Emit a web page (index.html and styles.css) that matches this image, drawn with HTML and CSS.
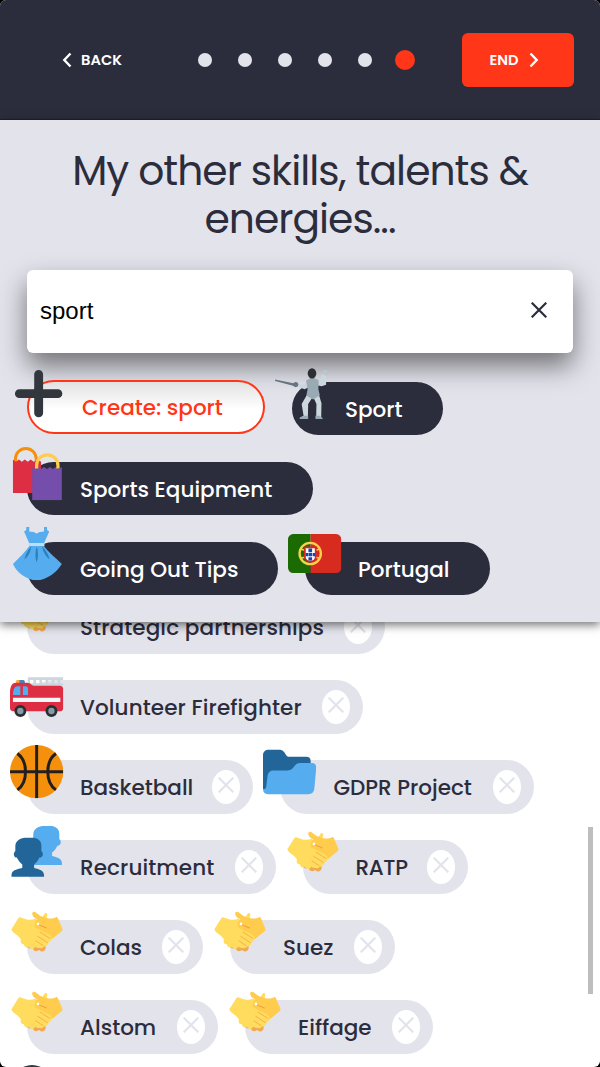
FILE: index.html
```
<!DOCTYPE html>
<html lang="en">
<head>
<meta charset="utf-8">
<title>My other skills</title>
<link rel="stylesheet" href="styles.css">
</head>
<body>
<svg class="defs" aria-hidden="true">
  <defs>
    <symbol id="plus" viewBox="0 0 36 36"><path fill="#31373d" d="M31 15H21V5a3 3 0 0 0-6 0v10H5a3 3 0 0 0 0 6h10v10a3 3 0 0 0 6 0V21h10a3 3 0 0 0 0-6z"/></symbol>
    <symbol id="fencer" viewBox="0 0 36 36">
      <path d="M0 8.500l.1.900L12.800 12.800l.5-1.600z" fill="#66757f"/>
      <path d="M22 9.800l-3 2.200-4-1-.5 2 5.500 2 4-2zM27 8.500l3.600 1 1.500-5h2.500L34.500 12l-3 1-4.500-1z" fill="#ccd6dd"/>
      <circle cx="34" cy="3.900" r="1.800" fill="#b8c6d0"/><circle cx="14" cy="11.900" r="1.700" fill="#66757f"/>
      <path d="M22 18l-4 7 1.300 8-2.800 1.500h5.700l.2-9.500 3.300-5L28 25l-.2 9h3.400l.2-9.500L29.300 17.500z" fill="#ccd6dd"/>
      <path d="M21 9.200l3-1.700h2.600l2.900 1.500-.2 6 1 4-4.500 3-4.600-2.800.8-4.200z" fill="#99aab5"/>
      <path d="M16.600 35.200c0-1.700 2.500-1.500 3.500-2.200h2.300v2.200zM27.300 35.200V33H30c.5.700 2.200.8 2.200 2.200z" fill="#99aab5"/>
      <ellipse cx="25" cy="4.300" rx="2.900" ry="3.500" fill="#292f33"/>
    </symbol>
    <symbol id="bags" viewBox="0 0 36 36">
      <path d="M3.700 10V8a7 7 0 0 1 14 0v2" fill="none" stroke="#f4900c" stroke-width="2"/>
      <path fill="#dd2e44" d="M2 8.500l2 1.500 2-1.500L8 10l2-1.500 2 1.500 2-1.500 2 1.500 3-1.500 2 1.500v21H2z"/>
      <path fill="#744eaa" d="M15 13.500l2 1.400 2-1.400 2 1.400 2-1.400 2 1.400 2-1.400 2 1.400 2-1.400 2 1.400 2-1.400V36H15z"/>
      <path d="M18 14.500V12.500a7.200 7.200 0 0 1 14.400 0v2" fill="none" stroke="#ffcc4d" stroke-width="2.200"/>
    </symbol>
    <symbol id="dress" viewBox="0 0 36 36">
      <path fill="#55acee" d="M11 0v2l-1.500 1L13 11v2C10 17 6 21 2 25c2 5 9 11 16 11s14-6 17-11c-4-4-9-8-12-12v-2l3.500-8L25 2V0h-2v3c-2 0-4 .5-5 1.500C17 3.500 15 3 13 3V0z"/>
      <path fill="#bbddf5" d="M12.500 10.800h10.800v2H12.500z"/>
      <path fill="#2a81bd" d="M14.400 13c-.6 4-2 7-4.700 9 .6-3 2-6 4.700-9zM17.700 14h.7c.8 4 .7 7-.4 10-1-3-1-6-.3-10zM21.600 13c3 3 4.600 6 5.200 9-2.700-2-4.400-5-5.200-9z"/>
    </symbol>
    <symbol id="portugal" viewBox="0 0 36 36">
      <path fill="#1b6b02" d="M15.300 4.800v26.300H3.500A3.500 3.500 0 0 1 0 27.500v-19a3.500 3.500 0 0 1 3.500-3.700z"/><path fill="#d82b20" d="M15.300 4.800h17.200a3.500 3.500 0 0 1 3.500 3.700v19a3.500 3.500 0 0 1-3.500 3.600H15.300z"/>
      <circle cx="15" cy="17.900" r="7.200" fill="none" stroke="#f9d14a" stroke-width="1.600"/>
      <path d="M8.500 15c4 1 9 1 13 0M8.500 21c4-1 9-1 13 0" fill="none" stroke="#f9d14a"/>
      <path d="M11.400 13.700h7.300v6.600c0 4.200-7.300 4.200-7.300 0z" fill="#fff" stroke="#da291c" stroke-width="1.200"/>
      <path fill="#1546b0" d="M13.800 14.600h2.500V17h-2.500zM13.800 17.500h2.500v2.300h-2.500zM13.800 20.400h2.500v2.200h-2.500zM11.900 17.500h1.600v2.300h-1.600zM16.700 17.500h1.600v2.300h-1.600z"/>
    </symbol>
    <symbol id="fire" viewBox="0 0 36 36">
      <path fill="#ccd6dd" fill-rule="evenodd" d="M12 8.300h24v6H15l-3-3zM13.500 10.200v2.100h2.300v-2.100zM17.600 10.200v2.100h2.300v-2.100zM21.700 10.200v2.100H24v-2.100zM25.800 10.200v2.100h2.300v-2.100zM29.900 10.200v2.100h2.300v-2.100zM34 10.200v2.100h2v-2.100z"/>
      <path fill="#ffac33" d="M4 12.500v-1.400c0-.6.500-1 1-1h1.500v2.400z"/><path fill="#3b88c3" d="M6.300 10.100H9c.6 0 1 .5 1 1v1.400H6.300z"/>
      <path fill="#dd2e44" d="M4 12h8c2 0 2.500 2 4 2h17.500c1.500 0 2.500 1 2.500 2.500V29c0 1.500-1 2.300-2.500 2.300H2.500C1 31.300 0 30.500 0 29V19c0-4 1-7 4-7z"/>
      <path fill="#55acee" d="M5 14.300h2v6H2c0-2.500.7-6 3-6zM8.700 14.300h2c1 0 1.500.7 1.500 1.700v4.300H8.700z"/>
      <path fill="#f5f8fa" d="M2 22.200h32V25H2z"/>
      <g fill="#8899a6" stroke="#292f33" stroke-width="1.900"><circle cx="7" cy="31.100" r="3.100"/><circle cx="28" cy="31.100" r="3.100"/></g>
    </symbol>
    <symbol id="ball" viewBox="0 0 36 36">
      <circle cx="18" cy="18" r="18" fill="#f4900c"/>
      <path d="M18 0v36M0 18h36M5 5.700C12.300 11 12.300 25 5 30.300M31 5.700C23.700 11 23.700 25 31 30.300" fill="none" stroke="#231f20" stroke-width="2"/>
    </symbol>
    <symbol id="folder" viewBox="0 0 36 36">
      <path fill="#226699" d="M0 30V7c0-2.500 1.500-3.800 4-3.800h7c2.500 0 3.300 1.500 4.200 3 .6 1.100 1.300 1.800 3 1.800h11c2 0 3 1 3 3v19z"/>
      <path fill="#55acee" d="M3 21.500c.2-3 1.800-4.300 4.500-4.300h9c2.500 0 3.500-1.200 4.500-2.600 1-1.300 2-2.400 4-2.400h8c2 0 3 1.300 3 3l-1.300 14c-.3 2.600-1.500 4-4.200 4H3.500C1 33.200.200 31.500 0 30c1.500 0 2-.8 2.200-2z"/>
    </symbol>
    <symbol id="people" viewBox="0 0 36 36">
      <path transform="translate(12.100 -8)" fill="#55acee" d="M16.300 29v-2.400c1.500-1 2.700-2.600 3.600-4.600 1.300 0 2.300-1 2.300-2.300 0-.9-.3-1.700-1-2.200v-3.600c0-3.600-3-5.300-6-5.300h-5c-3.600.4-6.600 2-6.600 6v2.900c-.6.500-1 1.300-1 2.200 0 1.300.8 2.300 2 2.300 1 2 2.200 3.600 3.700 4.600V29C4 30 1 30.600 1 34v1h22v-1c0-3.400-3-4-6.700-5z"/>
      <path fill="#226699" d="M16.300 29v-2.400c1.500-1 2.700-2.600 3.600-4.600 1.300 0 2.300-1 2.300-2.300 0-.9-.3-1.700-1-2.200v-3.600c0-3.600-3-5.300-6-5.300h-5c-3.600.4-6.600 2-6.600 6v2.900c-.6.500-1 1.300-1 2.200 0 1.300.8 2.300 2 2.300 1 2 2.200 3.600 3.700 4.600V29C4 30 1 30.600 1 34v1h22v-1c0-3.400-3-4-6.700-5z"/>
    </symbol>
    <symbol id="hands" viewBox="0 0 36 36">
      <path fill="#f0a950" d="M8.500 22c-1.500 2.500.3 5 2.500 4.200.3 3 2.400 3.900 4 2.500.8 2.700 3.200 3.200 4.600 1.500 1.700 2.200 4.200 1.200 4.600-1.500L22 22z"/>
      <path fill="#ffdc5d" d="M21.500 9.200l1.700-3.100c.7-1.200 2.300-.5 2 .9l-.8 3zM.9 16.300L5.600 9c.4-.7 1-.8 1.700-.6 2.700.9 5.700 2.600 10 .9l10.500 8-3.600 9.500c-.5 2-2.300 1.800-3.200.4-.2 2-2.500 2.400-3.900.8-.8 2.300-3.200 2-4.300.2-1.500 1.200-3 .2-3.400-1.700-1.700.2-2.700-1.400-2-3.200l-1-1.300C5 19.500 2 19.500.9 16.300z"/>
      <path fill="#ffcc4d" d="M15 6.300c-.4-1.500 1.200-2.200 2.300-1.400l3.300 2.500c4.600 1.300 6.700 2.800 10.500.8.500-.2.900 0 1.200.5L35.400 16c.2.600 0 1.200-.5 1.700L28 23.300l-5.200-4-6-4.100c-.7-1 0-2.100.3-3.400.2-.9.800-1.600 1.400-2.200-1.900-.3-3-1.600-3.500-3.300z"/>
      <path fill="#ffdc5d" d="M16 14.500l10.500 5.500c2.500 1.500 1.500 5-.5 5.300-.2 1.800-1.500 3-3.200 2.200-.3 1.900-2 2.200-3.600 1.200L12 22z"/>
      <path d="M19.500 13.300c1.700 1.200 3.300 1.200 5 2.200" fill="none" stroke="#f0a040" stroke-width=".7" stroke-linecap="round"/>
      <circle cx="18.900" cy="12.800" r=".9" fill="#fff"/>
      <path d="M20.300 18.300l6.500 4.200M18.800 21.200l6.500 4.200M17.500 24.200l4.800 3.200" fill="none" stroke="#f2ad48" stroke-width=".6" stroke-linecap="round"/>
    </symbol>
    <symbol id="cross" viewBox="0 0 16 16"><path d="M.7.700l14.600 14.600M15.300.7L.7 15.300" fill="none" stroke="currentColor" stroke-width="2.200"/></symbol>
  </defs>
</svg>
<main class="screen">
  <header class="topbar">
    <button class="back"><svg class="chevron" viewBox="0 0 8 14"><path d="M7.500.5L1.300 7l6.200 6.500"/></svg><span>BACK</span></button>
    <div class="steps"><i></i><i></i><i></i><i></i><i></i><i class="current"></i></div>
    <button class="end"><span>END</span><svg class="chevron" viewBox="0 0 8 14"><path d="M.5.5L6.700 7 .5 13.500"/></svg></button>
  </header>
  <section class="panel">
    <h1>My other skills, talents &amp;<br>energies...</h1>
    <div class="search"><span>sport</span><svg><use href="#cross"/></svg></div>
    <div class="row first">
      <div class="chip create"><svg class="emoji"><use href="#plus"/></svg><span class="label">Create: sport</span></div>
      <div class="chip dark sport"><svg class="emoji"><use href="#fencer"/></svg><span class="label">Sport</span></div>
    </div>
    <div class="row"><div class="chip dark equipment"><svg class="emoji"><use href="#bags"/></svg><span class="label">Sports Equipment</span></div></div>
    <div class="row">
      <div class="chip dark going"><svg class="emoji"><use href="#dress"/></svg><span class="label">Going Out Tips</span></div>
      <div class="chip dark portugal"><svg class="emoji"><use href="#portugal"/></svg><span class="label">Portugal</span></div>
    </div>
  </section>
  <section class="list">
    <div class="row"><div class="chip strategic"><svg class="emoji"><use href="#hands"/></svg><span class="label">Strategic partnerships</span><button class="remove"><svg><use href="#cross"/></svg></button></div></div>
    <div class="row"><div class="chip volunteer"><svg class="emoji"><use href="#fire"/></svg><span class="label">Volunteer Firefighter</span><button class="remove"><svg><use href="#cross"/></svg></button></div></div>
    <div class="row">
      <div class="chip basketball"><svg class="emoji"><use href="#ball"/></svg><span class="label">Basketball</span><button class="remove"><svg><use href="#cross"/></svg></button></div>
      <div class="chip gdpr"><svg class="emoji"><use href="#folder"/></svg><span class="label">GDPR Project</span><button class="remove"><svg><use href="#cross"/></svg></button></div>
    </div>
    <div class="row">
      <div class="chip recruitment"><svg class="emoji"><use href="#people"/></svg><span class="label">Recruitment</span><button class="remove"><svg><use href="#cross"/></svg></button></div>
      <div class="chip ratp"><svg class="emoji"><use href="#hands"/></svg><span class="label">RATP</span><button class="remove"><svg><use href="#cross"/></svg></button></div>
    </div>
    <div class="row">
      <div class="chip colas"><svg class="emoji"><use href="#hands"/></svg><span class="label">Colas</span><button class="remove"><svg><use href="#cross"/></svg></button></div>
      <div class="chip suez"><svg class="emoji"><use href="#hands"/></svg><span class="label">Suez</span><button class="remove"><svg><use href="#cross"/></svg></button></div>
    </div>
    <div class="row">
      <div class="chip alstom"><svg class="emoji"><use href="#hands"/></svg><span class="label">Alstom</span><button class="remove"><svg><use href="#cross"/></svg></button></div>
      <div class="chip eiffage"><svg class="emoji"><use href="#hands"/></svg><span class="label">Eiffage</span><button class="remove"><svg><use href="#cross"/></svg></button></div>
    </div>
    <div class="next-emoji"></div>
    <div class="scrollbar"></div>
  </section>
</main>
</body>
</html>
```
FILE: styles.css
```
* { box-sizing: border-box; }
body { margin: 0; background: #000; font-family: Poppins, Inter, sans-serif; color: #2c2d3c; }
.defs { position: absolute; width: 0; height: 0; }
button { border: 0; padding: 0; background: none; font: inherit; color: inherit; }
.screen { width: 600px; height: 1067px; overflow: hidden; display: flex; flex-direction: column; border-radius: 6px; background: #fff; }
.topbar { height: 120px; flex: none; display: flex; align-items: center; background: #2c2d3c; color: #fff; font-size: 14.670px; font-weight: 600; border-bottom: 1px solid #1f202c; }
.topbar span { padding-top: 1px; }
.back { display: flex; align-items: center; gap: 10px; width: 135px; margin-left: 63px; white-space: nowrap; }
.chevron { width: 8px; height: 14px; fill: none; stroke: #fff; stroke-width: 2.400; overflow: visible; }
.steps { display: flex; align-items: center; gap: 26px; }
.steps i { width: 14px; height: 14px; border-radius: 50%; background: #e3e3ec; }
.steps .current { width: 20px; height: 20px; margin-left: -3px; background: #ff3618; }
.end { display: flex; align-items: center; gap: 11px; width: 112px; height: 54px; margin-left: 46.500px; padding-left: 28px; border-radius: 6px; background: #ff3618; }
.panel { position: relative; z-index: 1; flex: none; height: 502px; padding: 27px 27px 0; background: #e3e3ec; box-shadow: 0 3px 9px rgba(0,0,0,.55); }
h1 { margin: 0; font-size: 40.800px; line-height: 48px; letter-spacing: -.980px; font-weight: 400; text-align: center; white-space: nowrap; }
.search { position: relative; display: flex; align-items: center; justify-content: space-between; height: 83px; margin-top: 27px; padding: 0 26px 2px 13px; border-radius: 6px; background: #fff; font: 24px "Liberation Sans", Arial, sans-serif; color: #000; box-shadow: 0 13px 27px rgba(0,0,0,.5); }
.search svg { width: 16px; height: 16px; margin-top: -1px; color: #2c2d3c; }
.row { display: flex; gap: 27px; height: 53.500px; margin-bottom: 26.500px; }
.first { height: 55px; margin-top: 27px; align-items: flex-start; }
.chip { position: relative; display: flex; align-items: center; flex: none; height: 53.500px; padding: 0 13px 0 53px; border-radius: 27px; background: #e3e3ec; font-size: 21.500px; font-weight: 500; white-space: nowrap; }
.label { padding-top: 2px; }
.dark { background: #2c2d3c; color: #fff; }
.create { width: 238px; border: 2px solid #ff3618; background: linear-gradient(#e2e2e2, #fff 55%); color: #ff3618; }
.emoji { position: absolute; left: -17px; top: -15px; width: 53.300px; height: 53.300px; overflow: visible; }
.create .emoji { left: -17.500px; top: -15.500px; }
.remove { display: flex; justify-content: center; width: 28px; height: 34px; margin-left: auto; padding-top: 7px; border-radius: 14px / 17px; background: #fff; color: #e3e3ec; }
.remove svg { width: 16px; height: 16px; }
.list { position: relative; flex: 1; margin-top: -22px; padding: 0 27px; }
.sport { width: 151px; margin-top: 1.500px; }
.equipment { width: 286px; }
.going { width: 251px; }
.portugal { width: 185px; }
.strategic { width: 358px; letter-spacing: .1px; }
.volunteer { width: 336px; letter-spacing: .1px; }
.basketball { width: 226.400px; }
.gdpr { width: 254px; }
.recruitment { width: 249.400px; letter-spacing: .1px; }
.ratp { width: 164.500px; padding-left: 52px; letter-spacing: -.3px; }
.colas { width: 176px; }
.suez { width: 165px; }
.alstom { width: 191px; }
.eiffage { width: 188px; }
.next-emoji { width: 40px; height: 40px; margin: -15px 0 0 -15px; border-radius: 50%; background: #31373d; }
.scrollbar { position: absolute; left: 588px; top: 227px; width: 5px; height: 167px; background: #bebebe; }
```
